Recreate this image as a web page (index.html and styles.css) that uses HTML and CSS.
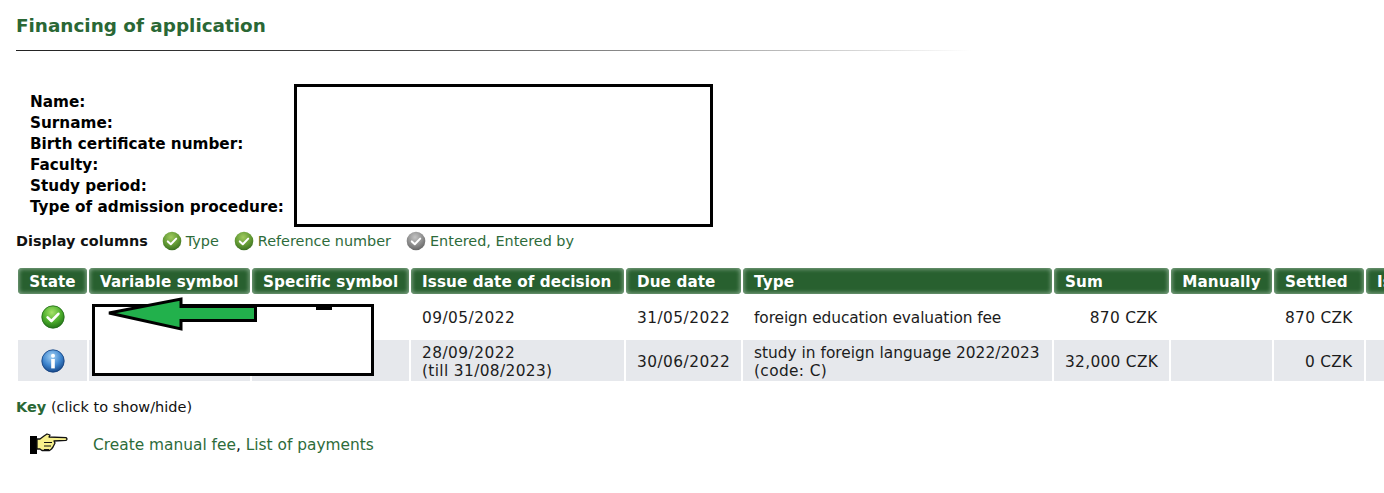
FILE: index.html
```html
<!DOCTYPE html>
<html lang="en">
<head>
<meta charset="utf-8">
<title>Financing of application</title>
<link rel="stylesheet" href="styles.css">
</head>
<body>
<svg class="defs" width="0" height="0" aria-hidden="true">
  <defs>
    <radialGradient id="gGreen" cx="45%" cy="30%" r="75%"><stop offset="0" stop-color="#a6e36a"/><stop offset=".55" stop-color="#4cae2c"/><stop offset="1" stop-color="#1d6b14"/></radialGradient>
    <radialGradient id="gOlive" cx="45%" cy="30%" r="75%"><stop offset="0" stop-color="#9fca5e"/><stop offset=".6" stop-color="#5f9632"/><stop offset="1" stop-color="#35691f"/></radialGradient>
    <radialGradient id="gGrey" cx="45%" cy="30%" r="75%"><stop offset="0" stop-color="#c4c4c4"/><stop offset=".6" stop-color="#8a8a8a"/><stop offset="1" stop-color="#5e5e5e"/></radialGradient>
    <radialGradient id="gBlue" cx="45%" cy="30%" r="75%"><stop offset="0" stop-color="#a5d2f5"/><stop offset=".55" stop-color="#3f86cf"/><stop offset="1" stop-color="#123f7f"/></radialGradient>
  </defs>
</svg>
<h1 class="title">Financing of application</h1>
<div class="rule"></div>
<dl class="info">
  <dt>Name:</dt>
  <dt>Surname:</dt>
  <dt>Birth certificate number:</dt>
  <dt>Faculty:</dt>
  <dt>Study period:</dt>
  <dt>Type of admission procedure:</dt>
</dl>
<div class="columns">
  <strong class="columns-label">Display columns</strong>
  <span class="toggle"><svg class="ic-small" viewBox="0 0 20 20"><circle cx="10" cy="10" r="9.3" fill="url(#gOlive)"/><path d="M5.8 10.4l3 2.8 5.4-5.6" class="tick"/></svg>Type</span>
  <span class="toggle"><svg class="ic-small" viewBox="0 0 20 20"><circle cx="10" cy="10" r="9.3" fill="url(#gOlive)"/><path d="M5.8 10.4l3 2.8 5.4-5.6" class="tick"/></svg>Reference number</span>
  <span class="toggle"><svg class="ic-small" viewBox="0 0 20 20"><circle cx="10" cy="10" r="9.3" fill="url(#gGrey)"/><path d="M5.8 10.4l3 2.8 5.4-5.6" class="tick"/></svg>Entered, Entered by</span>
</div>
<div class="table-clip">
<table class="fees">
  <colgroup>
    <col class="c1"><col class="c2"><col class="c3"><col class="c4"><col class="c5"><col class="c6"><col class="c7"><col class="c8"><col class="c9"><col class="c10">
  </colgroup>
  <thead>
    <tr>
      <th class="ctr">State</th><th>Variable symbol</th><th>Specific symbol</th><th>Issue date of decision</th><th>Due date</th><th>Type</th><th>Sum</th><th class="ctr">Manually</th><th>Settled</th><th>Issued</th>
    </tr>
  </thead>
  <tbody>
    <tr>
      <td class="ctr"><svg class="ic-state" viewBox="0 0 24 24"><circle cx="12" cy="12" r="11.2" fill="url(#gGreen)" stroke="#1f6a18" stroke-width=".8"/><path d="M6.6 12.4l3.8 3.6 7-7.2" class="tick thick"/></svg></td>
      <td></td><td></td>
      <td class="wide">09/05/2022</td><td class="wide">31/05/2022</td><td class="tight">foreign education evaluation fee</td>
      <td class="num">870 CZK</td><td></td><td class="num">870 CZK</td><td></td>
    </tr>
    <tr class="alt">
      <td class="ctr"><svg class="ic-state" viewBox="0 0 24 24"><circle cx="12" cy="12" r="11.2" fill="url(#gBlue)" stroke="#123f7f" stroke-width=".8"/><circle cx="12" cy="6.8" r="2" fill="#fff"/><rect x="10.2" y="10" width="3.6" height="9.4" fill="#fff"/></svg></td>
      <td></td><td></td>
      <td class="wide">28/09/2022<br><span class="wider">(till 31/08/2023)</span></td><td class="wide">30/06/2022</td><td>study in foreign language 2022/2023<br><span class="wider">(code: C)</span></td>
      <td class="num">32,000 CZK</td><td></td><td class="num">0 CZK</td><td></td>
    </tr>
  </tbody>
</table>
</div>
<p class="key"><strong>Key</strong> (click to show/hide)</p>
<div class="actions">
  <svg class="ic-hand" viewBox="0 0 40 24">
    <rect x="1" y="3" width="7" height="18" fill="#000"/>
    <path d="M8 6h3l4-3 3-2 3 1-1 2 17 .6q2 1.400 0 2.800l-12 .6 1 2-1 2-1 2-1.500 2-2 1.500H13l-2-1.500H8z" fill="#f7f08c" stroke="#111" stroke-width="1.300" stroke-linejoin="round"/>
    <path d="M15 9.500h8M15 13h7M15 16.500h5" stroke="#111" stroke-width="1.200" fill="none"/>
  </svg>
  <span class="links"><a href="#">Create manual fee</a>, <a href="#">List of payments</a></span>
</div>
<div class="redact redact-top"></div>
<div class="redact redact-table"></div>
<svg class="arrow" viewBox="0 0 156 36"><path d="M4 16 L76 2 V9.500 H150.500 V23.500 H76 V32 Z" fill="#22b14c" stroke="#000" stroke-width="3" stroke-linejoin="miter"/></svg>
</body>
</html>
```
FILE: styles.css
```css
html, body { margin: 0; padding: 0; background: #fff; }
body {
  position: relative;
  height: 493px;
  overflow: hidden;
  font-family: "DejaVu Sans", Verdana, sans-serif;
  font-size: 14.5px;
  color: #111;
}
.defs { position: absolute; }
.title {
  margin: 0;
  padding: 15px 0 0 16px;
  font-size: 18.400px;
  line-height: 22px;
  font-weight: 700;
  color: #2a6735;
}
.rule {
  height: 1px;
  margin: 13px 0 0 16px;
  width: 955px;
  background: linear-gradient(to right, #222 0%, #444 40%, #bbb 80%, #fff 100%);
}
.info {
  margin: 41px 0 0 30px;
  font-weight: 700;
  font-size: 15.250px;
  line-height: 21px;
  color: #000;
}
.info dt { margin: 0; }
.columns {
  display: flex;
  align-items: center;
  margin: 13px 0 0 16px;
  height: 20px;
  color: #2d6b3a;
  font-size: 14.400px;
}
.columns-label { color: #111; margin-right: 14px; }
.toggle { display: inline-flex; align-items: center; margin-right: 15px; }
.ic-small { width: 20px; height: 20px; margin-right: 4px; }
.tick { fill: none; stroke: #fff; stroke-width: 2; stroke-linecap: round; stroke-linejoin: round; }
.tick.thick { stroke-width: 2.6; }
.table-clip { margin: 15px 0 0 16px; width: 1368px; overflow: hidden; }
.fees {
  table-layout: fixed;
  border-collapse: separate;
  border-spacing: 2px;
  width: 1420px;
}
.c1 { width: 69px; } .c2 { width: 161px; } .c3 { width: 157px; } .c4 { width: 213px; }
.c5 { width: 115px; } .c6 { width: 309px; } .c7 { width: 115px; } .c8 { width: 101px; }
.c9 { width: 90px; } .c10 { width: 70px; }
.fees th {
  box-sizing: border-box;
  height: 26px;
  padding: 2px 11px 0;
  text-align: left;
  white-space: nowrap;
  overflow: hidden;
  font-size: 15.200px;
  letter-spacing: .1px;
  color: #fff;
  border-radius: 4px;
  background: #28602f;
  box-shadow: inset 0 0 4px 1px #86a98c;
}
.fees td {
  box-sizing: border-box;
  padding: 2px 11px 0;
  height: 41px;
  font-size: 15.400px;
  line-height: 18px;
  color: #1c1c1c;
  white-space: nowrap;
}
.fees td.wide { letter-spacing: .45px; }
.fees td.tight { letter-spacing: -.1px; }
.fees .wider { letter-spacing: .35px; }
.fees tbody tr:first-child td { height: 42px; }
.fees .alt td { background: #e6e8ec; }
.fees th.ctr, .fees td.ctr { text-align: center; padding: 2px 0 0; }
.fees td.ctr { padding: 0; }
.fees td.num { text-align: right; padding-right: 11.500px; letter-spacing: .3px; }
.ic-state { width: 24px; height: 24px; display: block; margin: 0 auto; }
.key { margin: 14px 0 0 16px; line-height: 20px; font-size: 14.500px; }
.key strong { color: #2a6735; }
.actions { display: flex; align-items: center; margin: 16px 0 0 29px; height: 24px; }
.ic-hand { width: 40px; height: 24px; margin-right: 24px; }
.links { color: #111; font-size: 15.400px; }
.links a { color: #2d6b3a; text-decoration: none; }
.redact { position: absolute; box-sizing: border-box; background: #fff; border: 3px solid #000; }
.redact-top { left: 294px; top: 84px; width: 419px; height: 143px; }
.redact-table { left: 92px; top: 304px; width: 282px; height: 72px; }
.redact-table::after { content: ""; position: absolute; left: 221px; top: 0; width: 16px; height: 3px; background: #000; }
.arrow { position: absolute; left: 105px; top: 297px; width: 156px; height: 36px; }
```
